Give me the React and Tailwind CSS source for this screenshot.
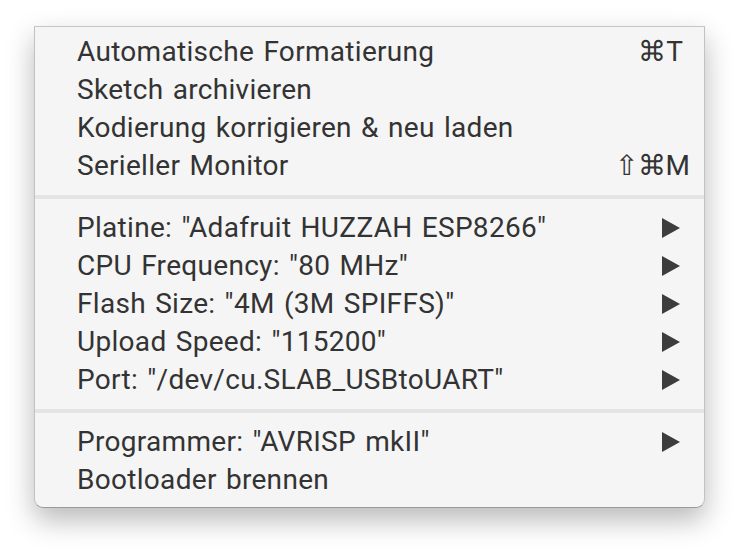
import React from 'react';

const groups = [
  [
    { label: 'Automatische Formatierung', shortcut: '⌘T', gap: 'mr-[21px]' },
    { label: 'Sketch archivieren' },
    { label: 'Kodierung korrigieren & neu laden' },
    { label: 'Serieller Monitor', shortcut: '⇧⌘M', gap: 'mr-[14px]' },
  ],
  [
    { label: 'Platine: "Adafruit HUZZAH ESP8266"', submenu: true },
    { label: 'CPU Frequency: "80 MHz"', submenu: true },
    { label: 'Flash Size: "4M (3M SPIFFS)"', submenu: true },
    { label: 'Upload Speed: "115200"', submenu: true },
    { label: 'Port: "/dev/cu.SLAB_USBtoUART"', submenu: true },
  ],
  [
    { label: 'Programmer: "AVRISP mkII"', submenu: true },
    { label: 'Bootloader brennen' },
  ],
];

const Arrow = () => (
  <svg width="18" height="20" viewBox="0 0 18 20" className="mr-[24px]">
    <path d="M0 0 L18 10 L0 20 Z" fill="#3d3d3d" />
  </svg>
);

const MenuItem = ({ item }) => (
  <div className="h-[38px] flex items-center pl-[42px] text-[#333333]">
    <span className="flex-1 tracking-[0.3px] [word-spacing:2px]">{item.label}</span>
    {item.shortcut && <span className={item.gap}>{item.shortcut}</span>}
    {item.submenu && <Arrow />}
  </div>
);

export default function App() {
  return (
    <div
      className="w-[738px] h-[550px] bg-white pl-[34px] pt-[26px]"
      style={{ fontFamily: 'Roboto, "Liberation Sans", sans-serif' }}
    >
      <div className="w-[671px] bg-[#f5f5f5] border border-t-[#c6c6c6] border-x-[#c2c2c2] border-b-[#9a9a9a] rounded-b-[9px] shadow-[0_12px_28px_rgba(0,0,0,0.28)] pt-[6px] pb-[8px] text-[28px] leading-none">
        {groups.map((group, gi) => (
          <div key={gi}>
            {gi > 0 && <div className="h-[4px] bg-[#e4e4e4] my-[10px]" />}
            {group.map((item) => (
              <MenuItem key={item.label} item={item} />
            ))}
          </div>
        ))}
      </div>
    </div>
  );
}
